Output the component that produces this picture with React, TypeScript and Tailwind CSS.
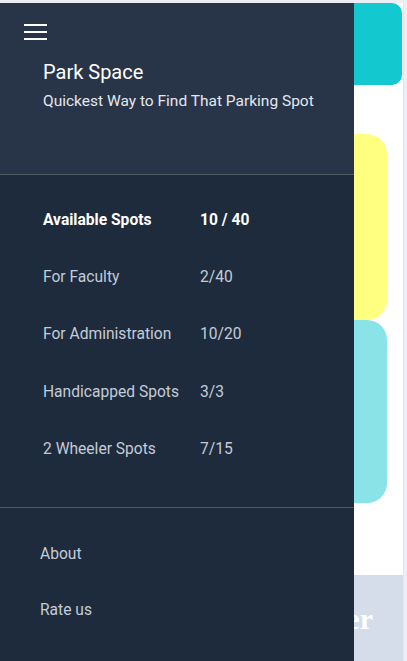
import { useState } from 'react';

const stats = [
  { label: 'Available Spots', value: '10 / 40', strong: true },
  { label: 'For Faculty', value: '2/40' },
  { label: 'For Administration', value: '10/20' },
  { label: 'Handicapped Spots', value: '3/3' },
  { label: '2 Wheeler Spots', value: '7/15' },
];

export default function App() {
  const [open, setOpen] = useState(true);

  return (
    <div className="relative h-[661px] w-[407px] overflow-hidden bg-[#eceef5] pt-[3px] font-['Roboto',sans-serif]">
      {/* Page behind the drawer */}
      <div className="flex h-[658px] w-[404px] flex-col border-r border-[#e2e4ee] bg-white">
        <div className="mx-[1px] h-[82px] rounded-[10px] bg-[#14c8d0]" />
        <div className="mt-[49px] flex flex-col pl-4 pr-[16px]">
          <div className="h-[186px] rounded-[20px] bg-[#ffff80]" />
          <div className="h-[183px] rounded-[20px] bg-[#8ae3e7]" />
        </div>
        <div className="mt-auto flex h-[86px] items-center justify-end bg-[#d4dde9] pr-[30px]">
          <span className="font-['Liberation_Serif',serif] text-[30px] font-bold text-white">Park Smarter</span>
        </div>
      </div>

      {/* Navigation drawer */}
      {open && (
        <aside className="absolute bottom-0 left-0 top-[3px] flex w-[354px] flex-col bg-[#1e2b3c]">
          <div className="h-[172px] border-b border-[#4d5d68] bg-[#283548]">
            <button onClick={() => setOpen(true)} className="ml-6 mt-[18px] flex h-[22px] w-[23px] flex-col justify-center gap-[5px]">
              <span className="h-[2px] w-[23px] bg-white" />
              <span className="h-[2px] w-[23px] bg-white" />
              <span className="h-[2px] w-[23px] bg-white" />
            </button>
            <h1 className="ml-[43px] mt-[17px] text-[20px] leading-6 text-white">Park Space</h1>
            <p className="ml-[43px] mt-[7px] text-[15.5px] leading-5 text-[#e3e7ee]">Quickest Way to Find That Parking Spot</p>
          </div>

          <ul className="flex flex-col border-b border-[#4b5868] pb-[29px] pt-[17px]">
            {stats.map(s => (
              <li
                key={s.label}
                className={`flex h-[57.25px] items-center pl-[43px] text-[15.6px] ${s.strong ? 'font-bold text-white' : 'text-[#c4ccd8]'}`}
              >
                <span className="w-[157px]">{s.label}</span>
                <span>{s.value}</span>
              </li>
            ))}
          </ul>

          <nav className="flex flex-col pt-[18px] text-[15.6px] text-[#c4ccd8]">
            <a className="flex h-[57px] items-center pl-10">About</a>
            <a className="flex h-[55px] items-center pl-10">Rate us</a>
          </nav>
        </aside>
      )}
    </div>
  );
}
